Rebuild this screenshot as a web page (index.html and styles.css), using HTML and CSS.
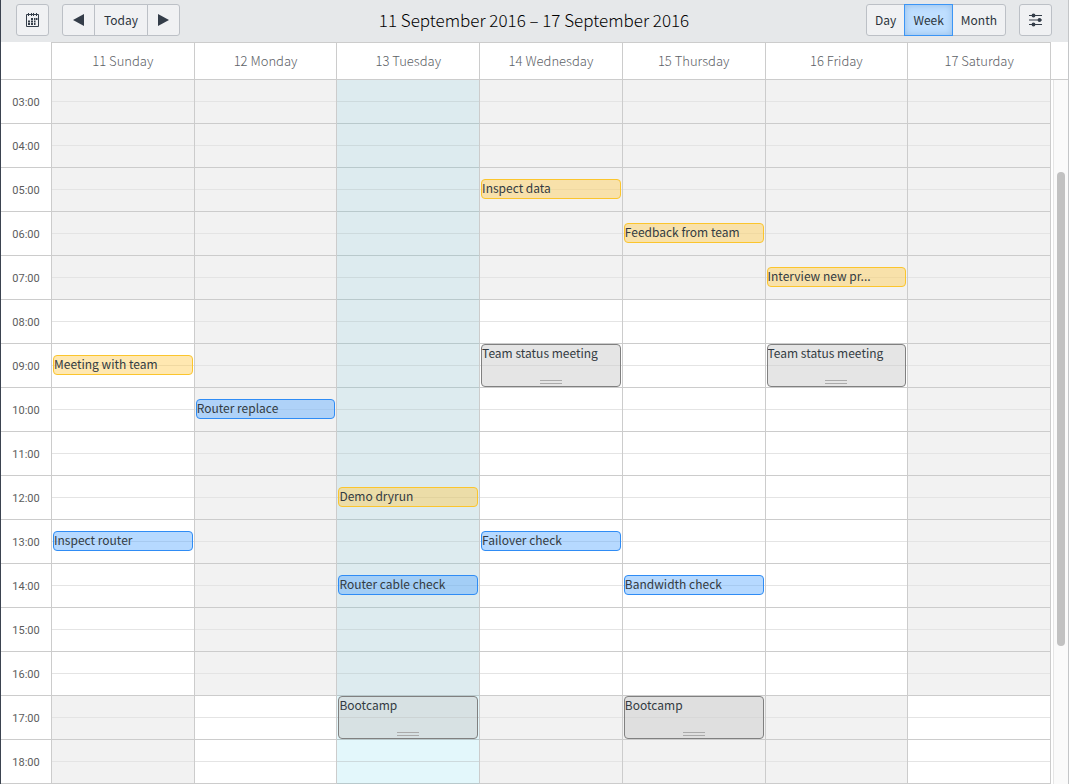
FILE: index.html
```html
<!DOCTYPE html>
<html lang="en">
<head>
<meta charset="utf-8">
<title>Calendar</title>
<link rel="stylesheet" href="styles.css">
</head>
<body>
<div class="app">
  <header class="toolbar">
    <div class="tools">
      <button class="btn btn-icon" type="button" aria-label="Pick a date">
        <svg width="14" height="14" viewBox="0 0 14 14" fill="#343d49"><path d="M0.500 1.500h12v12h-12z" fill="none" stroke="#343d49"/><path d="M2 0h1v3H2zM5 0h1v3H5zM7 0h1v3H7zM10 0h1v3h-1zM5 5h2v2H5zM8 5h1.500v2H8zM10 5h1.500v2H10zM2 7.500h2v2H2zM5 7.500h2v2H5zM8 7.500h1.500v2H8zM2 10h2v2H2zM5 10h2v2H5zM8 10h1.500v2H8z"/></svg>
      </button>
      <div class="group">
        <button class="btn btn-icon" type="button" aria-label="Previous week"><svg width="12" height="12" viewBox="0 0 12 12"><path d="M11 0v12L0 6z" fill="#343d49"/></svg></button>
        <button class="btn" type="button">Today</button>
        <button class="btn btn-icon" type="button" aria-label="Next week"><svg width="12" height="12" viewBox="0 0 12 12"><path d="M0 0v12l11-6z" fill="#343d49"/></svg></button>
      </div>
    </div>
    <h1 class="title">11 September 2016 – 17 September 2016</h1>
    <div class="tools tools-end">
      <div class="group views">
        <button class="btn" type="button">Day</button>
        <button class="btn btn-active" type="button" aria-pressed="true">Week</button>
        <button class="btn" type="button">Month</button>
      </div>
      <button class="btn btn-icon" type="button" aria-label="Settings">
        <svg width="14" height="14" viewBox="0 0 14 14" fill="#343d49"><path d="M0 2h13v1H0zM0 6.500h13v1H0zM0 11h13v1H0z"/><circle cx="4.500" cy="2.500" r="1.900"/><circle cx="10.500" cy="7" r="1.900"/><circle cx="4.500" cy="11.500" r="1.900"/></svg>
      </button>
    </div>
  </header>
  <main class="calendar">
    <table class="week">
      <thead>
        <tr><td class="corner"></td><th>11 Sunday</th><th>12 Monday</th><th>13 Tuesday</th><th>14 Wednesday</th><th>15 Thursday</th><th>16 Friday</th><th>17 Saturday</th></tr>
      </thead>
      <tbody class="early">
        <tr><th>03:00</th><td></td><td></td><td></td><td></td><td></td><td></td><td></td></tr>
        <tr><th>04:00</th><td></td><td></td><td></td><td></td><td></td><td></td><td></td></tr>
        <tr><th>05:00</th><td></td><td></td><td></td><td><div class="event amber">Inspect data</div></td><td></td><td></td><td></td></tr>
        <tr><th>06:00</th><td></td><td></td><td></td><td></td><td><div class="event amber">Feedback from team</div></td><td></td><td></td></tr>
        <tr><th>07:00</th><td></td><td></td><td></td><td></td><td></td><td><div class="event amber">Interview new pr...</div></td><td></td></tr>
      </tbody>
      <tbody class="work">
        <tr><th>08:00</th><td></td><td></td><td></td><td></td><td></td><td></td><td></td></tr>
        <tr><th>09:00</th><td><div class="event amber">Meeting with team</div></td><td></td><td></td><td><div class="event long">Team status meeting<span class="grip"></span></div></td><td></td><td><div class="event long">Team status meeting<span class="grip"></span></div></td><td></td></tr>
        <tr><th>10:00</th><td></td><td><div class="event blue">Router replace</div></td><td></td><td></td><td></td><td></td><td></td></tr>
        <tr><th>11:00</th><td></td><td></td><td></td><td></td><td></td><td></td><td></td></tr>
        <tr><th>12:00</th><td></td><td></td><td><div class="event amber">Demo dryrun</div></td><td></td><td></td><td></td><td></td></tr>
        <tr><th>13:00</th><td><div class="event blue">Inspect router</div></td><td></td><td></td><td><div class="event blue">Failover check</div></td><td></td><td></td><td></td></tr>
        <tr><th>14:00</th><td></td><td></td><td><div class="event blue">Router cable check</div></td><td></td><td><div class="event blue">Bandwidth check</div></td><td></td><td></td></tr>
        <tr><th>15:00</th><td></td><td></td><td></td><td></td><td></td><td></td><td></td></tr>
        <tr><th>16:00</th><td></td><td></td><td></td><td></td><td></td><td></td><td></td></tr>
      </tbody>
      <tbody class="late">
        <tr><th>17:00</th><td></td><td></td><td><div class="event long">Bootcamp<span class="grip"></span></div></td><td></td><td><div class="event long">Bootcamp<span class="grip"></span></div></td><td></td><td></td></tr>
        <tr><th>18:00</th><td></td><td></td><td></td><td></td><td></td><td></td><td></td></tr>
      </tbody>
    </table>
    <div class="side">
      <div class="side-head"></div>
      <div class="track"><div class="thumb"></div></div>
    </div>
  </main>
</div>
</body>
</html>
```
FILE: styles.css
```css
* { box-sizing: border-box; }

body {
  margin: 0;
  background: #fff;
  color: #333b42;
  font-family: "Noto Sans CJK SC", "Noto Sans", sans-serif;
  font-size: 12px;
}

.app {
  border-left: 1px solid #3b4350;
  border-right: 1px solid #c4c6c8;
}

.toolbar {
  display: grid;
  grid-template-columns: 1fr auto 1fr;
  align-items: center;
  height: 42px;
  padding: 0 16px 2px 15px;
  background: #e6e8ea;
}

.tools { display: flex; gap: 13px; }
.tools-end { justify-content: flex-end; }
.group { display: flex; }

.title {
  margin: 0;
  color: #000;
  font-size: 17px;
  font-weight: 300;
  line-height: 26px;
}

.btn {
  display: flex;
  align-items: center;
  justify-content: center;
  height: 32px;
  padding: 0 9px 2px;
  border: 1px solid #bcc0c6;
  border-radius: 3px;
  background: #f0f1f3;
  color: #2c343c;
  font: inherit;
}

.btn-icon { width: 33px; padding: 0; }
.views .btn { padding: 0 8px 2px; }
.group .btn { border-radius: 0; }
.group .btn + .btn { margin-left: -1px; }
.group .btn:first-child { border-radius: 3px 0 0 3px; }
.group .btn:last-child { border-radius: 0 3px 3px 0; }

.group .btn-active {
  z-index: 1;
  border-color: #3b95f5;
  background: #bfdfff;
  box-shadow: inset 0 0 7px #93bbe6;
}

.calendar { display: flex; }

.week {
  flex: 1;
  width: 100%;
  table-layout: fixed;
  border-collapse: separate;
  border-spacing: 0;
}

.week td, .week th {
  padding: 0;
  border-right: 1px solid #ccc;
  border-bottom: 1px solid #ccc;
}

.week thead th, .corner { height: 38px; }

.week thead th {
  padding-bottom: 1px;
  border-top: 1px solid #ccc;
  color: #5c6166;
  font-size: 13px;
  font-weight: 300;
}

.week .corner { width: 51px; }

.week tbody th {
  height: 44px;
  padding-top: 2px;
  color: #5c5c5c;
  font: 11px Roboto, "Liberation Sans", sans-serif;
}

.week tbody td {
  background: linear-gradient(#e4e4e4, #e4e4e4) 0 21px / 100% 1px no-repeat #f2f2f2;
  vertical-align: top;
}

.work td:nth-child(2), .work td:nth-child(5), .work td:nth-child(6), .work td:nth-child(7),
.late td:nth-child(3), .late td:nth-child(8) {
  background-color: #fff !important;
}

.week tbody td:nth-child(4) {
  border-bottom-color: #b9c9cc;
  background-color: #ddebef;
  background-image: linear-gradient(#cddadd, #cddadd);
}

.week .late td:nth-child(4) { background-color: #e3f7fb; }

.event {
  height: 20px;
  margin: 11px 1px 0;
  overflow: hidden;
  border: 1px solid;
  border-radius: 4px;
  line-height: 16px;
  white-space: nowrap;
}

.amber { border-color: #fbc52d; background: rgba(255, 202, 75, 0.43); }
.blue { border-color: #2f8cf5; background: rgba(85, 166, 255, 0.43); }

.long {
  display: flex;
  flex-direction: column;
  justify-content: space-between;
  height: 43px;
  margin-top: 0;
  padding-bottom: 2px;
  border-color: #808080;
  background: rgba(204, 204, 204, 0.5);
}

.grip {
  align-self: center;
  width: 22px;
  height: 4px;
  border: solid #aaa;
  border-width: 1px 0;
}

.side {
  display: flex;
  flex: none;
  flex-direction: column;
  width: 17px;
}

.side-head { height: 38px; border-bottom: 1px solid #ccc; }

.track {
  flex: 1;
  margin-left: 2px;
  border-left: 1px solid #e6e6e6;
  background: #fafafa;
}

.track::before { content: ""; display: block; height: 13%; }

.thumb {
  width: 8px;
  height: 67.4%;
  margin-left: 3px;
  border-radius: 4px;
  background: #c1c1c1;
}
```
